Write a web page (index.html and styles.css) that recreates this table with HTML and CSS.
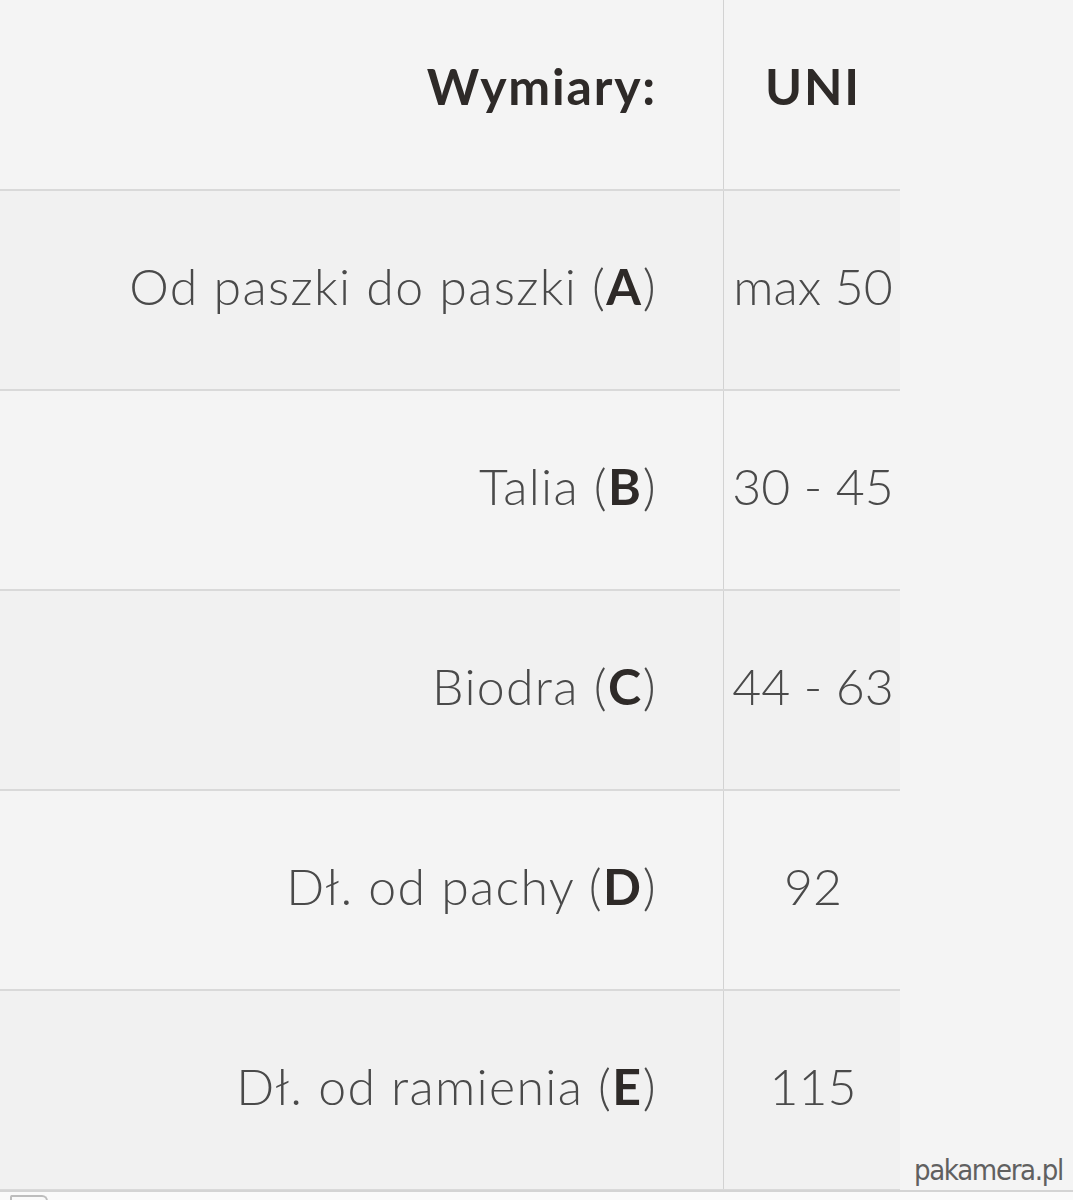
FILE: index.html
```html
<!DOCTYPE html>
<html lang="pl">
<head>
<meta charset="utf-8">
<title>Wymiary</title>
<link rel="stylesheet" href="styles.css">
</head>
<body>
<div class="page">
  <div class="size-table">
    <div class="row head">
      <div class="cell label"><b>Wymiary:</b></div>
      <div class="cell value"><b>UNI</b></div>
    </div>
    <div class="row odd">
      <div class="cell label">Od paszki do paszki (<b>A</b>)</div>
      <div class="cell value">max 50</div>
    </div>
    <div class="row">
      <div class="cell label">Talia (<b>B</b>)</div>
      <div class="cell value">30 - 45</div>
    </div>
    <div class="row odd">
      <div class="cell label">Biodra (<b>C</b>)</div>
      <div class="cell value">44 - 63</div>
    </div>
    <div class="row">
      <div class="cell label">Dł. od pachy (<b>D</b>)</div>
      <div class="cell value">92</div>
    </div>
    <div class="row odd">
      <div class="cell label">Dł. od ramienia (<b>E</b>)</div>
      <div class="cell value">115</div>
    </div>
  </div>
  <div class="watermark">pakamera.pl</div>
</div>
<div class="footer-bar"><span class="tab-icon"></span></div>
</body>
</html>
```

FILE: styles.css
```css
html, body {
  margin: 0;
  padding: 0;
  background: #f4f4f4;
}

.page {
  position: relative;
  height: 1190px;
  overflow: hidden;
}

.size-table {
  width: 900px;
  display: flex;
  flex-direction: column;
  font-family: "Lato", "Open Sans", sans-serif;
  font-weight: 300;
  font-size: 50px;
  letter-spacing: 1.3px;
  color: #4a4a4a;
}

.row {
  display: grid;
  grid-template-columns: 724px 176px;
  height: 198px;
  border-bottom: 2px solid #d9d9d9;
  background: #f4f4f4;
}

.row.odd {
  background: #f1f1f1;
}

.row.head {
  height: 189px;
}

.cell {
  display: flex;
  align-items: center;
  white-space: nowrap;
  padding-bottom: 9px;
}

.cell b {
  font-weight: 700;
  color: #2e2a28;
  letter-spacing: 1.8px;
}

.label {
  justify-content: flex-end;
  padding-right: 66px;
  border-right: 1px solid #d2d2d2;
}

.value {
  justify-content: center;
  padding-left: 2px;
  letter-spacing: 0;
}

.head .cell {
  padding-bottom: 18px;
}

.watermark {
  position: absolute;
  right: 10px;
  bottom: 3px;
  font-family: "DejaVu Sans", sans-serif;
  font-stretch: condensed;
  font-size: 29px;
  color: #606060;
  letter-spacing: -1.3px;
}

.footer-bar {
  height: 10px;
  border-top: 2px solid #d4d4d4;
  background: #fafafa;
  padding-left: 10px;
}

.tab-icon {
  display: block;
  width: 34px;
  height: 10px;
  margin-top: 3px;
  border: 2px solid #bdbdbd;
  border-bottom: none;
  border-radius: 2px 6px 0 0;
}
```
